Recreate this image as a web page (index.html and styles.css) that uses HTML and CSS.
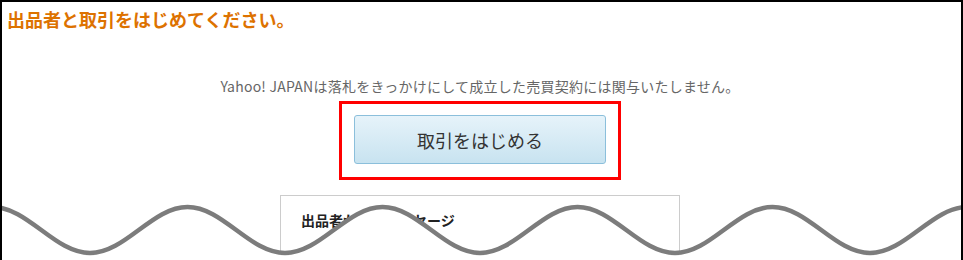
FILE: index.html
```html
<!DOCTYPE html>
<html lang="ja">
<head>
<meta charset="utf-8">
<title>取引開始</title>
<link rel="stylesheet" href="styles.css">
</head>
<body>
<div class="page">
  <h1 class="title">出品者と取引をはじめてください。</h1>
  <p class="notice">Yahoo! JAPANは落札をきっかけにして成立した売買契約には関与いたしません。</p>
  <div class="highlight">
    <button class="start-btn" type="button">取引をはじめる</button>
  </div>
  <div class="card">
    <p class="card-title">出品者からのメッセージ</p>
  </div>
  <svg class="tear" viewBox="0 0 963 260" width="963" height="260" aria-hidden="true">
    <path class="tear-fill" d="M-7.5,207 C27.9,207 54.6,253 90,253 C125.4,253 152.1,207 187.5,207 C222.9,207 249.6,253 285,253 C320.4,253 347.1,207 382.5,207 C417.9,207 444.6,253 480,253 C515.4,253 542.1,207 577.5,207 C612.9,207 639.6,253 675,253 C710.4,253 737.1,207 772.5,207 C807.9,207 834.6,253 870,253 C905.4,253 932.1,207 967.5,207 L967.5,270 L-7.5,270 Z"/>
    <path class="tear-line" d="M-7.5,207 C27.9,207 54.6,253 90,253 C125.4,253 152.1,207 187.5,207 C222.9,207 249.6,253 285,253 C320.4,253 347.1,207 382.5,207 C417.9,207 444.6,253 480,253 C515.4,253 542.1,207 577.5,207 C612.9,207 639.6,253 675,253 C710.4,253 737.1,207 772.5,207 C807.9,207 834.6,253 870,253 C905.4,253 932.1,207 967.5,207"/>
  </svg>
</div>
</body>
</html>
```

FILE: styles.css
```css
* {
  box-sizing: border-box;
}

html, body {
  margin: 0;
  padding: 0;
  background: #fff;
}

body {
  font-family: "Noto Sans CJK JP", "Noto Sans", sans-serif;
  width: 963px;
  height: 260px;
  overflow: hidden;
}

.page {
  position: relative;
  width: 963px;
  height: 260px;
  border: 2px solid #000;
  border-bottom: none;
  padding: 0 3px 0 0;
  overflow: hidden;
}

.title {
  margin: 0;
  padding: 5px 0 0 5px;
  font-size: 18px;
  line-height: 24px;
  font-weight: bold;
  color: #dd7200;
}

.notice {
  margin: 45px 0 0;
  text-align: center;
  font-size: 14px;
  line-height: 20px;
  letter-spacing: 0.25px;
  color: #666;
}

.highlight {
  margin: 5px auto 0;
  width: 282px;
  height: 79px;
  border: 3px solid #f00;
  display: flex;
  align-items: center;
  justify-content: center;
}

.start-btn {
  width: 252px;
  height: 49px;
  margin-top: -2px;
  border: 1px solid #8bbfdb;
  border-radius: 3px;
  background: linear-gradient(to bottom, #e6f3fa, #c8e3f0);
  color: #333;
  font-family: "Noto Sans CJK JP", "Noto Sans", sans-serif;
  font-size: 18px;
  line-height: 24px;
  padding: 0;
}

.card {
  margin: 15px auto 0;
  width: 400px;
  border: 1px solid #ccc;
  padding: 14px 20px;
  height: 80px;
}

.card-title {
  margin: 0;
  font-size: 14px;
  line-height: 20px;
  font-weight: bold;
  color: #222;
}

.tear {
  position: absolute;
  left: -2px;
  top: -2px;
  display: block;
}

.tear-fill {
  fill: #fff;
}

.tear-line {
  fill: none;
  stroke: #7c7c7c;
  stroke-width: 4.5;
}
```
